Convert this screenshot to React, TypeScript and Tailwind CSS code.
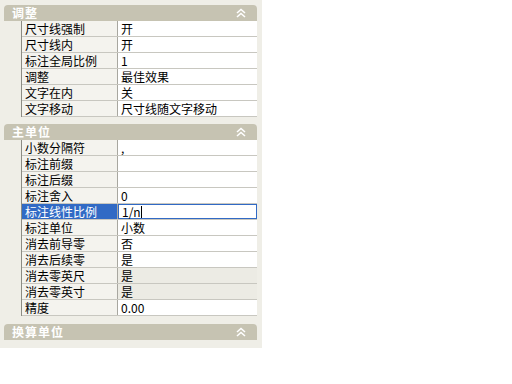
const font = { fontFamily: '"SimSun", "Noto Sans CJK SC", sans-serif' };

type Row = { label: string; value: string; selected?: boolean; dim?: boolean };

const adjust: Row[] = [
  { label: "尺寸线强制", value: "开" },
  { label: "尺寸线内", value: "开" },
  { label: "标注全局比例", value: "1" },
  { label: "调整", value: "最佳效果" },
  { label: "文字在内", value: "关" },
  { label: "文字移动", value: "尺寸线随文字移动" },
];

const primary: Row[] = [
  { label: "小数分隔符", value: "," },
  { label: "标注前缀", value: "" },
  { label: "标注后缀", value: "" },
  { label: "标注舍入", value: "0" },
  { label: "标注线性比例", value: "1/n", selected: true },
  { label: "标注单位", value: "小数" },
  { label: "消去前导零", value: "否" },
  { label: "消去后续零", value: "是" },
  { label: "消去零英尺", value: "是", dim: true },
  { label: "消去零英寸", value: "是", dim: true },
  { label: "精度", value: "0.00" },
];

const Chevrons = () => (
  <svg width="12" height="10" viewBox="0 0 12 10" fill="none" stroke="#ffffff" strokeWidth="1.6">
    <polyline points="2,5 6,1.5 10,5" />
    <polyline points="2,9 6,5.5 10,9" />
  </svg>
);

const Header = ({ title }: { title: string }) => (
  <div className="h-[16px] rounded-t-[4px] bg-[#c6c3b2] flex items-center justify-between pl-[8px] pr-[10px]">
    <span className="text-[12px] font-bold text-white leading-none tracking-[1px]">{title}</span>
    <Chevrons />
  </div>
);

const Table = ({ rows }: { rows: Row[] }) => (
  <div className="ml-[17px] w-[236px] border-l border-[#8c8c84]">
    {rows.map((r) => (
      <div key={r.label} className="flex h-[16px] border-b border-[#c8c7c0] text-[12px] leading-none text-black">
        <div
          className={`w-[96px] flex items-center pl-[3px] border-r border-[#a8a7a0] ${
            r.selected ? "bg-[#316ac5] text-white" : "bg-[#f4f3ee]"
          }`}
        >
          {r.label}
        </div>
        <div
          className={`flex-1 flex items-center pl-[3px] ${
            r.selected ? "bg-white border border-[#316ac5]" : r.dim ? "bg-[#ecebe4]" : "bg-white"
          }`}
        >
          {r.value}
          {r.selected && <span className="w-px h-[12px] bg-black" />}
        </div>
      </div>
    ))}
  </div>
);

export default function App() {
  return (
    <div className="w-full h-[384px] bg-white" style={font}>
      <div className="w-[262px] h-[348px] bg-[#efeee7] pt-[5px] pl-[4px] pr-[5px]">
        <Header title="调整" />
        <Table rows={adjust} />
        <div className="mt-[7px]">
          <Header title="主单位" />
          <Table rows={primary} />
        </div>
        <div className="mt-[8px]">
          <Header title="换算单位" />
        </div>
      </div>
    </div>
  );
}
